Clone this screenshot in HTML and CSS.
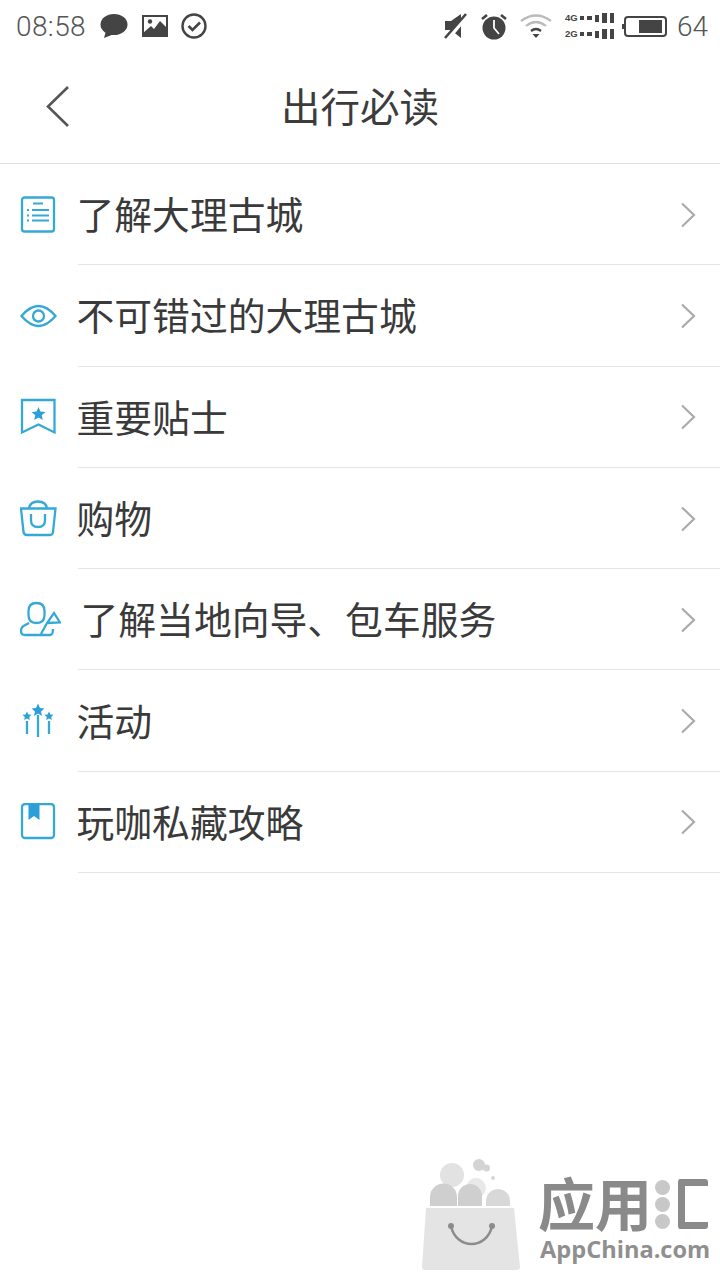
FILE: index.html
```
<!DOCTYPE html>
<html lang="zh">
<head>
<meta charset="utf-8">
<title>出行必读</title>
<link rel="stylesheet" href="styles.css">
</head>
<body>
<div class="page">
  <div class="status">
    <div class="status-side">
      <span class="time">08:58</span>
      <svg class="si-chat" width="28" height="26" viewBox="0 0 28 26"><ellipse cx="14" cy="11.500" rx="13.500" ry="10.500" fill="#444"/><path d="M6 18 L4 25 L13 21.500Z" fill="#444"/></svg>
      <svg class="si-img" width="28" height="24" viewBox="0 0 28 24"><rect x="2" y="2" width="24" height="20" fill="none" stroke="#444" stroke-width="2"/><path d="M2 22 L2 19 L10 12 L13 15 L19 7 L27 15 L27 22Z" fill="#444"/><circle cx="9" cy="7.500" r="2.200" fill="#444"/></svg>
      <svg class="si-check" width="26" height="26" viewBox="0 0 26 26"><circle cx="13" cy="13" r="11.500" fill="none" stroke="#444" stroke-width="2.400"/><path d="M7.500 13 L11.500 17 L19 9.500" fill="none" stroke="#444" stroke-width="2.600"/></svg>
    </div>
    <div class="status-side">
      <svg class="si-mute" width="24" height="26" viewBox="0 0 24 26"><path d="M1 8 H7 L17 1 V25 L7 17 H1Z" fill="#444"/><path d="M3 26 L24 1" stroke="#fff" stroke-width="5"/><path d="M1 25 L22 1" stroke="#444" stroke-width="2.600"/></svg>
      <svg class="si-alarm" width="26" height="27" viewBox="0 0 26 27"><circle cx="13" cy="15" r="11.500" fill="#444"/><path d="M13 7 V15 L18 21" fill="none" stroke="#fff" stroke-width="1.800"/><path d="M1 6 L6 2 M25 6 L20 2" stroke="#444" stroke-width="2.600"/></svg>
      <svg class="si-wifi" width="32" height="26" viewBox="0 0 32 26"><path d="M1 8 Q16 -3 31 8" fill="none" stroke="#bbb" stroke-width="2.200"/><path d="M6 13 Q16 5 26 13" fill="none" stroke="#bbb" stroke-width="2.200"/><path d="M11 18 Q16 14 21 18" fill="none" stroke="#444" stroke-width="2.400"/><path d="M12.500 21 L19.500 21 L16 25Z" fill="#444"/></svg>
      <div class="signal">
        <div class="sig-row"><span class="sig-label">4G</span><i class="b1"></i><i class="b1"></i><i class="b2"></i><i class="b3"></i><i class="b3"></i></div>
        <div class="sig-row"><span class="sig-label">2G</span><i class="b1"></i><i class="b1"></i><i class="b2"></i><i class="b3"></i><i class="b3"></i></div>
      </div>
      <div class="battery"><div class="battery-fill"></div></div>
      <span class="batt-num">64</span>
    </div>
  </div>

  <header class="nav">
    <svg class="back" width="26" height="44" viewBox="0 0 26 44"><path d="M23 2 L3 21.500 L23 41" fill="none" stroke="#555" stroke-width="2.600"/></svg>
    <h1 class="title">出行必读</h1>
  </header>

  <ul class="list">
    <li class="row">
      <svg class="ico" width="38" height="38" viewBox="0 0 38 38"><rect x="2" y="1.500" width="32" height="34" rx="2.500" fill="none" stroke="#35a9d6" stroke-width="2.300"/><path d="M13 7.500 H23 M12 14 H29 M12 19.500 H29 M12 24.500 H29" stroke="#35a9d6" stroke-width="1.900"/><path d="M7 14 H9 M7 19.500 H9 M7 24.500 H9" stroke="#35a9d6" stroke-width="1.900"/></svg>
      <span class="label">了解大理古城</span>
      <svg class="chev" width="16" height="26" viewBox="0 0 16 26"><path d="M2 1.500 L14 13 L2 24.500" fill="none" stroke="#aaa" stroke-width="2.200"/></svg>
    </li>
    <li class="row">
      <svg class="ico" width="38" height="38" viewBox="0 0 38 38"><path d="M1.500 19 Q18.500 -1 35.500 19 Q18.500 39 1.500 19Z" fill="none" stroke="#35a9d6" stroke-width="2.300"/><circle cx="18.500" cy="19" r="5.500" fill="none" stroke="#35a9d6" stroke-width="2.300"/></svg>
      <span class="label">不可错过的大理古城</span>
      <svg class="chev" width="16" height="26" viewBox="0 0 16 26"><path d="M2 1.500 L14 13 L2 24.500" fill="none" stroke="#aaa" stroke-width="2.200"/></svg>
    </li>
    <li class="row">
      <svg class="ico" width="38" height="38" viewBox="0 0 38 38"><path d="M2 2 H34.500 V34.500 L18.500 26.500 L2 34.500Z" fill="none" stroke="#35a9d6" stroke-width="2.300"/><path d="M18.500 9 L20.400 13.500 L25.500 14 L21.700 17.300 L22.800 22 L18.500 19.500 L14.200 22 L15.300 17.300 L11.500 14 L16.600 13.500Z" fill="#2a9fd8"/></svg>
      <span class="label">重要贴士</span>
      <svg class="chev" width="16" height="26" viewBox="0 0 16 26"><path d="M2 1.500 L14 13 L2 24.500" fill="none" stroke="#aaa" stroke-width="2.200"/></svg>
    </li>
    <li class="row">
      <svg class="ico" width="38" height="38" viewBox="0 0 38 38"><path d="M1 8.500 H35.500 L33 32 Q32.700 35 30 35 H7 Q4 35 3.500 32Z" fill="none" stroke="#35a9d6" stroke-width="2.300"/><path d="M9 8.500 Q10 1.500 18 1.500 Q26 1.500 27 8.500" fill="none" stroke="#35a9d6" stroke-width="2.300"/><path d="M11 14 V20 Q11 27 18 27 Q25 27 25 20 V14" fill="none" stroke="#35a9d6" stroke-width="2.300"/></svg>
      <span class="label">购物</span>
      <svg class="chev" width="16" height="26" viewBox="0 0 16 26"><path d="M2 1.500 L14 13 L2 24.500" fill="none" stroke="#aaa" stroke-width="2.200"/></svg>
    </li>
    <li class="row">
      <svg class="ico ico-wide" width="41" height="38" viewBox="0 0 41 38"><path d="M16.500 2 Q8.500 2 8.500 10 V14 Q8.500 22 16.500 22 Q24.500 22 24.500 14 V10 Q24.500 2 16.500 2Z" fill="none" stroke="#35a9d6" stroke-width="2.300"/><path d="M9 22 L3.500 25 Q1 26.500 1 30 Q1 34 5 34 H30 Q33 34 33 28" fill="none" stroke="#35a9d6" stroke-width="2.300"/><path d="M21 33 L27 22 L34 12 L40 21.500 L27 22" fill="none" stroke="#35a9d6" stroke-width="2.300"/></svg>
      <span class="label label-shift">了解当地向导、包车服务</span>
      <svg class="chev" width="16" height="26" viewBox="0 0 16 26"><path d="M2 1.500 L14 13 L2 24.500" fill="none" stroke="#aaa" stroke-width="2.200"/></svg>
    </li>
    <li class="row">
      <svg class="ico" width="38" height="38" viewBox="0 0 38 38"><path d="M7 19 V32 M18 13 V35 M29 19 V32" stroke="#35a9d6" stroke-width="2.300"/><path d="M18 1.500 L20 6 L24.500 6.500 L21 9.500 L22 14 L18 11.500 L14 14 L15 9.500 L11.500 6.500 L16 6Z" fill="#2a9fd8"/><path d="M7 9.500 L8.400 12.500 L11.500 12.800 L9.200 15 L9.800 18 L7 16.400 L4.200 18 L4.800 15 L2.500 12.800 L5.600 12.500Z" fill="#2a9fd8"/><path d="M29 9.500 L30.400 12.500 L33.500 12.800 L31.200 15 L31.800 18 L29 16.400 L26.200 18 L26.800 15 L24.500 12.800 L27.600 12.500Z" fill="#2a9fd8"/></svg>
      <span class="label">活动</span>
      <svg class="chev" width="16" height="26" viewBox="0 0 16 26"><path d="M2 1.500 L14 13 L2 24.500" fill="none" stroke="#aaa" stroke-width="2.200"/></svg>
    </li>
    <li class="row">
      <svg class="ico" width="38" height="38" viewBox="0 0 38 38"><rect x="2" y="1" width="32" height="34" rx="3" fill="none" stroke="#35a9d6" stroke-width="2.300"/><path d="M8.500 1 H19.500 V17 L14 13 L8.500 17Z" fill="#2a9fd8"/></svg>
      <span class="label">玩咖私藏攻略</span>
      <svg class="chev" width="16" height="26" viewBox="0 0 16 26"><path d="M2 1.500 L14 13 L2 24.500" fill="none" stroke="#aaa" stroke-width="2.200"/></svg>
    </li>
  </ul>

  <div class="wm">
    <svg class="wm-bag" width="104" height="114" viewBox="0 0 104 114"><circle cx="32" cy="17" r="12" fill="#e2e2e2"/><circle cx="59" cy="7" r="6" fill="#d4d4d4"/><circle cx="66.500" cy="10" r="3.500" fill="#d4d4d4"/><circle cx="73" cy="20" r="2" fill="#d6d6d6"/><circle cx="56" cy="30" r="10" fill="#e8e8e8"/><path d="M10 48 V39 A13.500 13.500 0 0 1 37 39 V48Z" fill="#cfcfcf"/><path d="M38 48 V38 A12 12 0 0 1 62 38 V48Z" fill="#cfcfcf"/><path d="M66 48 V43 A12 12 0 0 1 90 43 V48Z" fill="#d8d8d8"/><path d="M6 50 H94 L100 109 Q100 112 96 112 H5 Q2 112 2 109Z" fill="#e4e4e4"/><path d="M31 68 C36 92 67 92 72 68" fill="none" stroke="#8c8c8c" stroke-width="2.500"/><circle cx="31" cy="68" r="3" fill="#8c8c8c"/><circle cx="72" cy="68" r="3" fill="#8c8c8c"/></svg>
    <div class="wm-text">
      <div class="wm-cn"><span class="wm-word">应用</span><span class="wm-dots"><i></i><i></i><i></i></span><span class="wm-hui"></span></div>
      <div class="wm-en">AppChina.com</div>
    </div>
  </div>
</div>
</body>
</html>
```
FILE: styles.css
```
* { box-sizing: border-box; }
html, body { margin: 0; padding: 0; background: #fff; }
body { font-family: "Noto Sans CJK SC", "Noto Sans", sans-serif; color: #3a3a3a; }
.page { position: relative; width: 720px; height: 1280px; overflow: hidden; }

.status { height: 52px; display: flex; justify-content: space-between; align-items: center; padding: 0 12px 0 16px; }
.status-side { display: flex; align-items: center; }
.time { width: 84px; font-family: Roboto, sans-serif; font-size: 28px; color: #555; font-weight: 300; letter-spacing: 0.400px; white-space: nowrap; }
.si-img { margin-left: 13px; }
.si-check { margin-left: 12px; }
.si-alarm { margin-left: 13px; }
.si-wifi { margin-left: 13px; }
.signal { margin-left: 13px; display: flex; flex-direction: column; gap: 6px; width: 49px; }
.sig-row { display: flex; align-items: center; height: 10px; }
.sig-label { font-family: "Liberation Sans", sans-serif; font-size: 9.500px; font-weight: 700; color: #444; width: 12px; line-height: 10px; white-space: nowrap; }
.sig-row i { display: block; width: 4.400px; margin-left: 3px; background: #444; }
.sig-row .b1 { height: 4px; }
.sig-row .b2 { height: 7px; }
.sig-row .b3 { height: 10px; }
.battery { margin-left: 10px; width: 43px; height: 21px; border: 2px solid #444; border-radius: 4px; padding: 2px 3px 2px 0; display: flex; justify-content: flex-end; position: relative; }
.battery::before { content: ""; position: absolute; left: -4px; top: 6px; width: 2px; height: 5px; background: #444; }
.battery-fill { width: 23px; background: #444; }
.batt-num { font-family: Roboto, sans-serif; font-size: 28px; font-weight: 300; color: #555; margin-left: 10px; }

.nav { height: 112px; position: relative; display: flex; align-items: center; justify-content: center; border-bottom: 1px solid #e2e2e2; padding-bottom: 6px; }
.back { position: absolute; left: 45px; top: 33px; }
.title { margin: 0; font-size: 39.500px; font-weight: 400; color: #3c3c3c; line-height: 1; }

.list { list-style: none; margin: 0; padding: 0 0 0 20px; }
.row { position: relative; height: 101.300px; display: flex; align-items: center; }
.row::after { content: ""; position: absolute; left: 58px; right: 0; bottom: 0; height: 1px; background: #e6e6e6; }
.ico { flex: none; width: 38px; margin-right: 18.500px; }
.ico-wide { width: 41px; margin-right: 15.500px; }
.label { flex: 1; height: 100%; display: flex; align-items: center; font-size: 37.800px; color: #3a3a3a; padding-bottom: 4px; white-space: nowrap; }
.label-shift { padding-left: 4px; }
.chev { flex: none; margin-right: 24px; }

.wm { position: absolute; left: 420px; top: 1158px; display: flex; gap: 14px; }
.wm-text { padding-top: 14px; }
.wm-cn { display: flex; align-items: center; height: 58px; color: #8a8a8a; }
.wm-word { font-size: 57px; font-weight: 700; line-height: 1; white-space: nowrap; }
.wm-dots { display: flex; flex-direction: column; gap: 2px; margin: 6px 0 0 3px; }
.wm-dots i { display: block; width: 15px; height: 15px; border-radius: 50%; background: #c8c8c8; }
.wm-hui { width: 30px; height: 50px; margin: 6px 0 0 8px; border: 7px solid #8a8a8a; border-right: 0; border-radius: 3px; }
.wm-en { font-family: "Open Sans", sans-serif; font-size: 23.600px; font-weight: 700; color: #8f8f8f; line-height: 24px; margin-top: 7px; margin-left: 2px; white-space: nowrap; }
```
